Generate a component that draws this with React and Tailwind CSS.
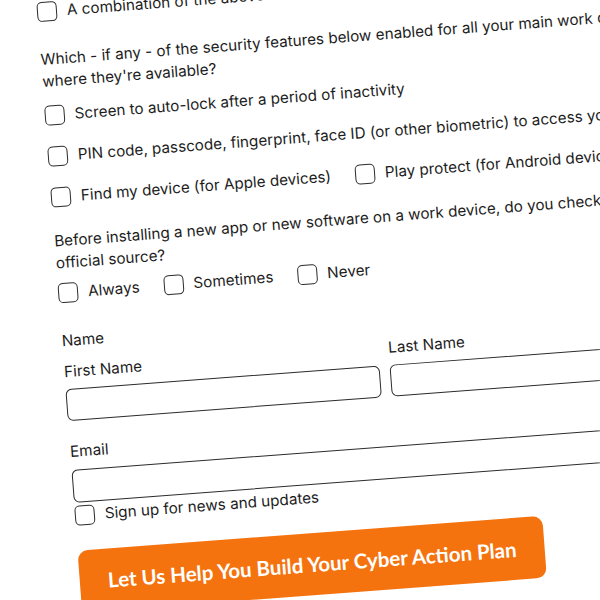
import React from 'react';

const Box = () => (
  <span className="block w-5 h-5 shrink-0 rounded-[5px] border-[1.5px] border-[#2b2b2b] bg-white" />
);

const Option = ({ label, className = '' }) => (
  <label className={`flex items-center gap-[10px] h-[22px] whitespace-nowrap ${className}`}>
    <Box />
    <span>{label}</span>
  </label>
);

const Input = ({ className = '' }) => (
  <div className={`h-[32px] rounded-[6px] border-[1.5px] border-[#2b2b2b] bg-white ${className}`} />
);

export default function App() {
  return (
    <div className="w-[600px] h-[600px] overflow-hidden bg-white relative">
      <div
        className="w-[760px] origin-top-left rotate-[-4.3deg] pl-[36px] pt-[3.5px] text-[15.25px] leading-[22px] text-[#1c1c1c]"
        style={{ fontFamily: 'Inter, "Noto Sans", sans-serif' }}
      >
        <Option label="A combination of the above" />

        <div className="mt-[26px] whitespace-nowrap">
          <p>Which - if any - of the security features below enabled for all your main work devices,</p>
          <p>where they're available?</p>
        </div>

        <div className="mt-[12px] flex flex-col gap-[19px]">
          <Option label="Screen to auto-lock after a period of inactivity" />
          <Option label="PIN code, passcode, fingerprint, face ID (or other biometric) to access your device" />
          <div className="flex gap-[24px]">
            <Option label="Find my device (for Apple devices)" />
            <Option label="Play protect (for Android devices)" />
          </div>
        </div>

        <div className="mt-[22px] whitespace-nowrap">
          <p>Before installing a new app or new software on a work device, do you check it's from an</p>
          <p>official source?</p>
        </div>

        <div className="mt-[8px] flex gap-[24px]">
          <Option label="Always" />
          <Option label="Sometimes" />
          <Option label="Never" />
        </div>

        <p className="mt-[26px]">Name</p>
        <div className="mt-[9px] grid grid-cols-[315px_315px] gap-x-[10px]">
          <div>
            <p>First Name</p>
            <Input className="mt-[6px]" />
          </div>
          <div>
            <p>Last Name</p>
            <Input className="mt-[6px]" />
          </div>
        </div>

        <p className="mt-[20px]">Email</p>
        <Input className="mt-[7px] h-[33px] w-[640px]" />

        <Option label="Sign up for news and updates" className="mt-[2px]" />

        <button
          className="mt-[24px] w-[466px] h-[62px] rounded-[10px] bg-[#f5730f] text-white text-[20.5px] font-bold"
          style={{ fontFamily: 'Lato, sans-serif' }}
        >
          Let Us Help You Build Your Cyber Action Plan
        </button>
      </div>
    </div>
  );
}
